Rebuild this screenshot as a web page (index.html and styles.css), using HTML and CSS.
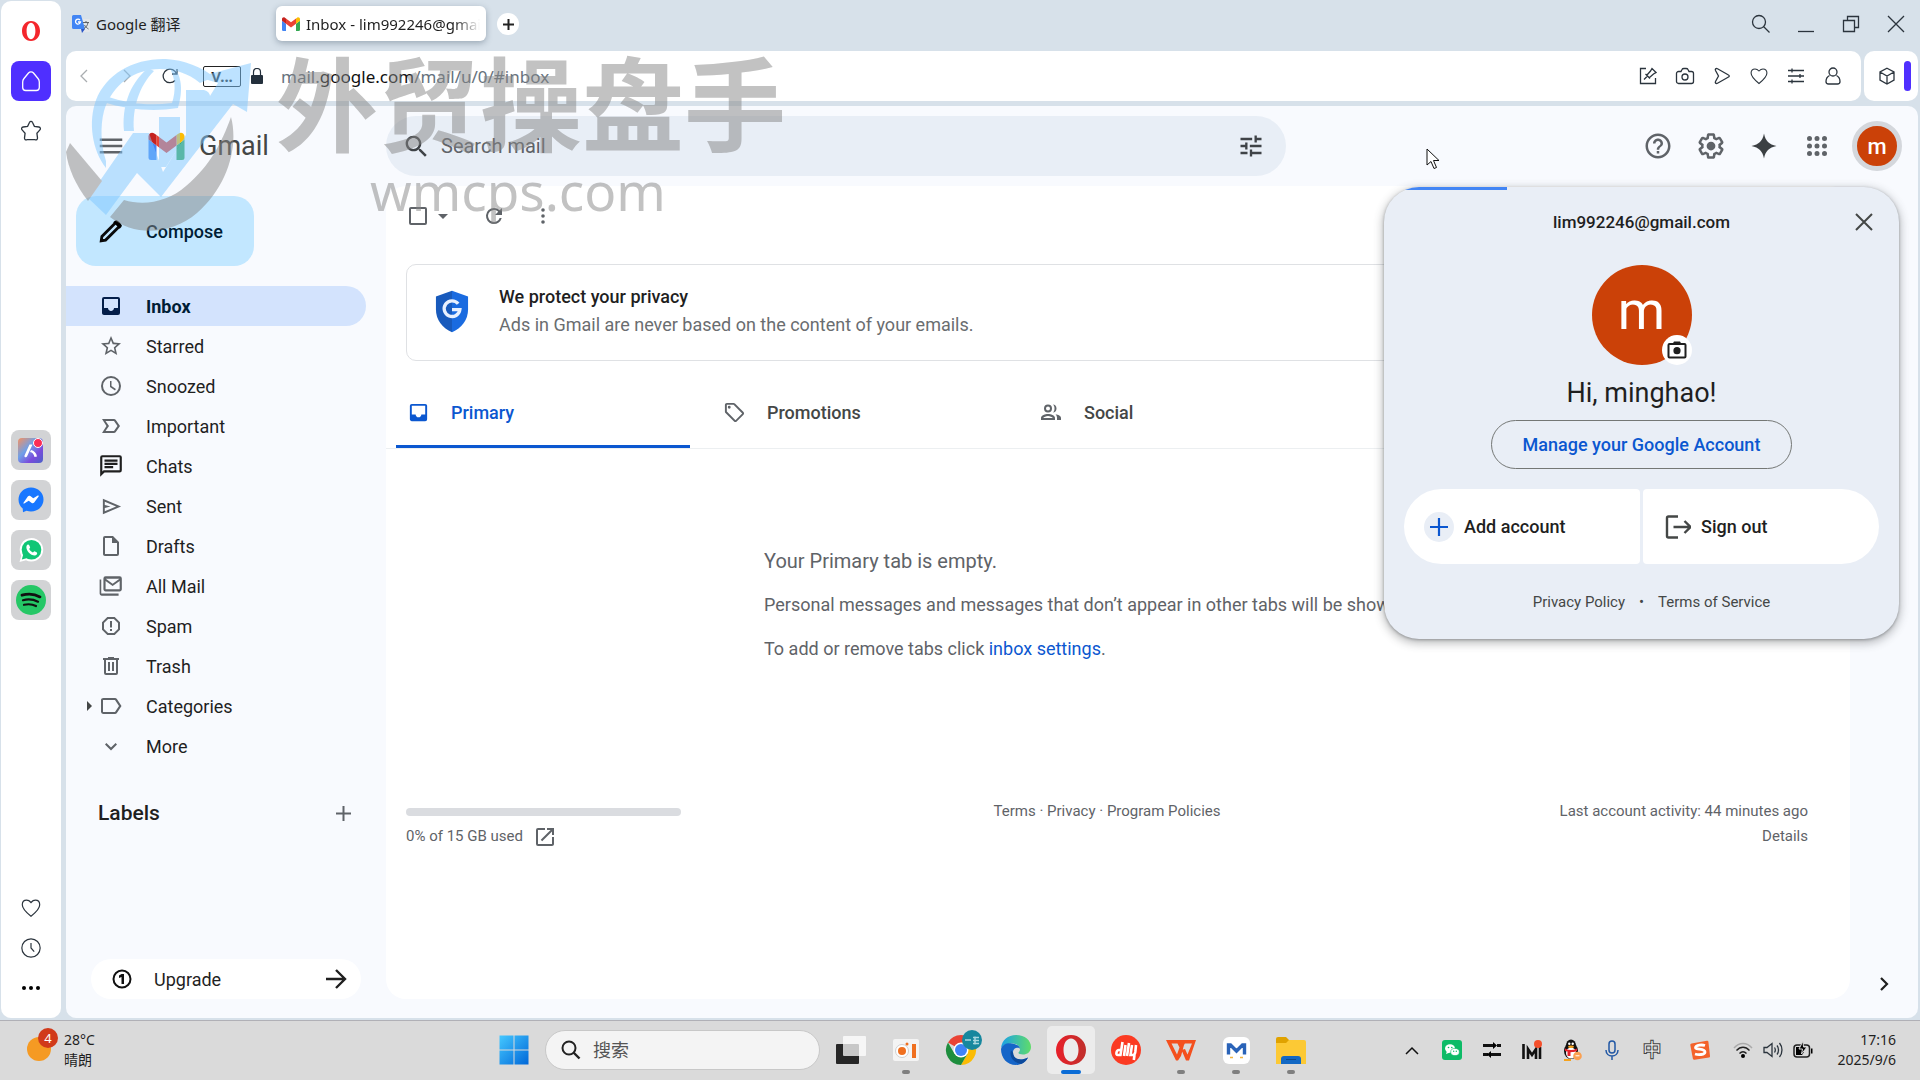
FILE: index.html
```html
<!DOCTYPE html>
<html lang="en">
<head>
  <meta charset="UTF-8" />
  <meta name="viewport" content="width=device-width, initial-scale=1.0" />
  <title>Inbox - lim992246@gmail.com - Gmail</title>
  <link rel="stylesheet" href="styles.css">
</head>
<body>

<!-- Shared icons -->
<svg class="defs" width="0" height="0" aria-hidden="true">
  <symbol id="gmail" viewBox="0 0 36 28">
    <path fill="#4285f4" d="M2.500 28H8V13.500L0 7.500v18A2.500 2.500 0 0 0 2.500 28z"/>
    <path fill="#34a853" d="M28 28h5.500a2.500 2.500 0 0 0 2.500-2.500v-18l-8 6z"/>
    <path fill="#fbbc04" d="M28 3v10.500l8-6V4.300c0-3-3.400-4.700-5.800-2.900z"/>
    <path fill="#ea4335" d="M8 13.500V3l10 7.500L28 3v10.500L18 21z"/>
    <path fill="#c5221f" d="M0 4.300v3.200l8 6V3L5.800 1.400C3.400-.4 0 1.300 0 4.300z"/>
  </symbol>
  <symbol id="search" viewBox="0 0 24 24">
    <path d="M15.500 14h-.79l-.28-.27C15.410 12.590 16 11.110 16 9.500 16 5.910 13.090 3 9.500 3S3 5.910 3 9.500 5.910 16 9.500 16c1.610 0 3.090-.59 4.230-1.570l.27.28v.79l5 4.990L20.490 19l-4.990-5zm-6 0C7.010 14 5 11.990 5 9.500S7.010 5 9.500 5 14 7.010 14 9.500 11.990 14 9.500 14z"/>
  </symbol>
  <symbol id="inbox" viewBox="0 0 24 24">
    <path d="M19 3H5a2 2 0 0 0-2 2v14c0 1.100.9 2 2 2h14a2 2 0 0 0 2-2V5a2 2 0 0 0-2-2zm0 11h-4c0 1.660-1.350 3-3 3s-3-1.340-3-3H5V5h14v9z"/>
  </symbol>
  <symbol id="heart" viewBox="0 0 24 24">
    <path d="M12 21C5 15.500 2.500 12 2.500 8.500 2.500 5.500 4.500 3.500 7.200 3.500c2 0 3.300.8 4.800 2.500 1.500-1.700 2.800-2.500 4.800-2.500 2.700 0 4.700 2 4.700 5 0 3.500-2.500 7-9.500 12.500z"/>
  </symbol>
  <symbol id="clock" viewBox="0 0 24 24">
    <circle cx="12" cy="12" r="10"/><path d="M12 6.500V12l3.500 4"/>
  </symbol>
</svg>

<div class="browser">
  <aside class="dock">
    <div class="dock-group">
      <button class="dock-btn" aria-label="Opera menu"><svg width="20" height="24" viewBox="0 0 20 24"><path fill="#f4262c" fill-rule="evenodd" d="M10 2c5.500 0 9 4.500 9 10s-3.500 10-9 10-9-4.500-9-10S4.500 2 10 2zm0 1.800C7.300 3.800 5.600 7.500 5.600 12s1.700 8.200 4.400 8.200 4.400-3.700 4.400-8.200S12.700 3.800 10 3.800z"/></svg></button>
      <button class="dock-btn home" aria-label="Home"><svg class="line" width="24" height="24" viewBox="0 0 24 24"><path d="M5 9.500 9.500 4a3.300 3.300 0 0 1 5 0L19 9.500c1 1.200 1.300 2 1.300 3.500v5.500a3 3 0 0 1-3 3H6.700a3 3 0 0 1-3-3V13C3.700 11.500 4 10.700 5 9.500z"/></svg></button>
      <button class="dock-btn" aria-label="Speed dial"><svg class="line" width="24" height="24" viewBox="0 0 24 24"><path d="M10.600 3.300c.6-1.300 2.200-1.300 2.800 0l2 4 4.500.7c1.500.2 2 1.900 1 2.900l-3 3.300.6 4.700c.2 1.500-1.200 2.500-2.500 1.800h-8c-1.300.7-2.700-.3-2.500-1.800l.6-4.700-3-3.300c-1-1-.5-2.700 1-2.900l4.500-.7z"/></svg></button>
    </div>
    <div class="dock-group apps">
      <button class="dock-btn app" aria-label="Aria"><svg width="28" height="28" viewBox="0 0 28 28"><defs><linearGradient id="aria" x1="0" y1="0" x2="1" y2="1"><stop offset="0" stop-color="#f59060"/><stop offset=".4" stop-color="#6fa0e8"/><stop offset=".7" stop-color="#7a4bdc"/><stop offset="1" stop-color="#4a62c8"/></linearGradient></defs><rect x="1" y="2" width="25" height="25" rx="4" fill="url(#aria)"/><path fill="#fff" d="M12.500 8.500h3L10 20.500c-.8 1.500-3.200.7-2.500-1zM14 14c3 .5 5.500 3 6 6.500l-2.500.5c-.8-3-2-4.500-4.500-5z"/><circle cx="21" cy="7" r="4.500" fill="#fb2c55" stroke="#fff"/></svg></button>
      <button class="dock-btn app" aria-label="Messenger"><svg width="26" height="26" viewBox="0 0 26 26"><path fill="#1877ff" d="M13 .5C6 .5.5 5.700.5 12.500c0 3.700 1.500 6.800 4.200 9L5 25.300l3.500-1.500c1.400.5 3 .7 4.500.7 7 0 12.500-5.200 12.500-12S20 .5 13 .5z"/><path fill="#fff" d="M5.500 15.800 9.800 9.500c.6-.8 1.700-1 2.500-.5l3 2.200 4.500-2.700c.6-.3 1.200.3.800.9l-4.400 6c-.6.8-1.700 1-2.500.5l-3-2.200-4.500 2.900c-.5.3-1-.3-.7-.8z"/></svg></button>
      <button class="dock-btn app" aria-label="WhatsApp"><svg width="26" height="26" viewBox="0 0 26 26"><path fill="#fff" d="M13.500 1A11.800 11.800 0 0 0 3.300 18.700L1.500 25l6.500-1.700A11.800 11.800 0 1 0 13.500 1z"/><circle cx="13.500" cy="12.800" r="9.800" fill="#10c676"/><path fill="#10c676" d="m3.800 22.500 1.700-6 4 4.500z"/><path fill="#fff" d="M8.500 9c.5-1.500 2-2 2.600-1l1 2.300c.2.500-.9 1.500-.9 1.800.7 1.600 2 2.700 3.700 3.400.4 0 1.200-1.300 1.700-1.200l2.300 1.200c.8.700-.2 2.700-1.800 3-4 .4-9.700-5-8.600-9.500z"/></svg></button>
      <button class="dock-btn app" aria-label="Spotify"><svg width="30" height="30" viewBox="0 0 30 30"><circle cx="15" cy="15" r="15" fill="#25c766"/><path fill="none" stroke="#111" stroke-linecap="round" stroke-width="2.800" d="M6 10.200c6.500-1.700 13-1 18 1.700"/><path fill="none" stroke="#111" stroke-linecap="round" stroke-width="2.200" d="M7 15.200c5.500-1.400 10.500-.8 15 1.500M8 19.800c4.500-1 8.500-.6 12 1.200"/></svg></button>
    </div>
    <div class="dock-group tight">
      <button class="dock-btn" aria-label="Pinboards"><svg class="line" width="22" height="22"><use href="#heart"/></svg></button>
      <button class="dock-btn" aria-label="History"><svg class="line" width="22" height="22"><use href="#clock"/></svg></button>
      <button class="dock-btn" aria-label="More"><svg width="20" height="6" viewBox="0 0 20 6"><circle cx="3" cy="3" r="2"/><circle cx="10" cy="3" r="2"/><circle cx="17" cy="3" r="2"/></svg></button>
    </div>
  </aside>

  <div class="window">
    <div class="tabbar">
      <button class="browser-tab"><svg width="18" height="20" viewBox="0 0 18 20"><rect x="8" y="5" width="10" height="13" rx="1" fill="#e3e6ea"/><path fill="#4285f4" d="M1.500 1H9l4 14H1.500A1.500 1.500 0 0 1 0 13.500v-11A1.500 1.500 0 0 1 1.500 1z"/><path fill="#2a56c6" d="m9 15 1 4 3-4z"/><path fill="none" stroke="#fff" stroke-width="1.300" d="M8 6a2.500 2.500 0 1 0 .5 2H6"/><path fill="none" stroke="#5f6368" d="M11 8.500h6M14 7v1.500M16 8.500c-.5 3-2 5-4 6M12.500 11c1 2 2.500 3 4 4"/></svg><span>Google 翻译</span></button>
      <button class="browser-tab active"><svg width="18" height="14"><use href="#gmail"/></svg><span>Inbox - lim992246@gmail.com</span></button>
      <button class="new-tab" aria-label="New tab"><svg width="11" height="11" viewBox="0 0 11 11"><path d="M5.500 0v11M0 5.500h11" stroke="#222" stroke-width="2"/></svg></button>
      <div class="window-controls">
        <button aria-label="Search tabs"><svg class="line" width="20" height="20" viewBox="0 0 20 20"><circle cx="8" cy="8" r="6.500"/><path d="m12.500 12.500 6 6"/></svg></button>
        <button aria-label="Minimize"><svg class="line" width="18" height="18" viewBox="0 0 18 18"><path d="M1 16.500h16"/></svg></button>
        <button aria-label="Restore"><svg class="line" width="18" height="18" viewBox="0 0 18 18"><path d="M5.500 5.500v-4h11v11h-4M1.500 5.500h11v11h-11z"/></svg></button>
        <button aria-label="Close"><svg class="line" width="18" height="18" viewBox="0 0 18 18"><path d="m1 1 16 16M17 1 1 17"/></svg></button>
      </div>
    </div>

    <div class="toolbar-row">
      <div class="address-bar">
        <button class="nav-btn faded" aria-label="Back"><svg class="line" width="8" height="14" viewBox="0 0 8 14"><path d="M7 1 1 7l6 6"/></svg></button>
        <button class="nav-btn faded" aria-label="Forward"><svg class="line" width="8" height="14" viewBox="0 0 8 14"><path d="m1 1 6 6-6 6"/></svg></button>
        <button class="nav-btn reload" aria-label="Reload"><svg class="line" width="16" height="16" viewBox="0 0 16 16"><path d="M13 12.500A6.800 6.800 0 1 1 14.500 6M15 1v5h-5"/></svg></button>
        <button class="vpn">V...</button>
        <svg class="lock" width="12" height="16" viewBox="0 0 12 16"><rect y="7" width="12" height="9" rx="1" fill="#24303c"/><path fill="none" stroke="#24303c" stroke-width="1.200" d="M2.500 7V4a3.500 3.500 0 0 1 7 0v3"/></svg>
        <div class="url">mail.<b>google.com</b>/mail/u/0/#inbox</div>
        <div class="page-actions">
          <button aria-label="Edit"><svg class="line" width="18" height="18" viewBox="0 0 18 18"><path d="M7 1.500H1.500v15h15V11M5 12.500l3.500-3.500M6.500 7l4.500 4.500M8 8l3.500-4L13 1.500 17 5.500l-2.500 1.500-4 3.500"/></svg></button>
          <button aria-label="Snapshot"><svg class="line" width="20" height="18" viewBox="0 0 20 18"><path d="M3.500 4.500H6L7 2.500C7.300 1.800 8 1.500 9 1.500h2c1 0 1.700.3 2 1l1 2h2.500a2 2 0 0 1 2 2v8a2 2 0 0 1-2 2h-13a2 2 0 0 1-2-2v-8a2 2 0 0 1 2-2z"/><circle cx="10" cy="10" r="3"/></svg></button>
          <button aria-label="Send"><svg class="line" width="18" height="18" viewBox="0 0 18 18"><path d="M2.500 3.500c-.7-1.500.5-2.500 2-1.700L15.500 8c1 .5 1 1.500 0 2l-11 6.200c-1.500.8-2.700-.2-2-1.700L5.500 9z"/></svg></button>
          <button aria-label="Save to pinboard"><svg class="line" width="20" height="20"><use href="#heart"/></svg></button>
          <button aria-label="Easy setup"><svg class="line" width="18" height="18" viewBox="0 0 18 18"><path d="M1 3.500h16M1 9h16M1 14.500h16M5 1.500v4M13 7v4M5 12.500v4"/></svg></button>
          <button aria-label="Profile"><svg class="line" width="16" height="18" viewBox="0 0 16 18"><circle cx="8" cy="5" r="4"/><path d="M4.500 8.500C1.500 10 1 12 1 14.500c0 1.500.7 2.500 2.500 2.500h9c1.800 0 2.500-1 2.500-2.500 0-2.500-.5-4.500-3.500-6"/></svg></button>
        </div>
      </div>
      <div class="side-box">
        <button aria-label="Extensions"><svg class="line" width="18" height="18" viewBox="0 0 18 18"><path d="M9 1.200 16 5v8l-7 4-7-4V5zM2 5l7 4 7-4M9 9v8"/></svg></button>
        <span class="side-mark"></span>
      </div>
    </div>

    <div class="page">
      <header class="gmail-header">
        <div class="brand">
          <button class="menu-btn" aria-label="Main menu"><svg width="30" height="30" viewBox="0 0 24 24"><path fill="#5f6368" d="M3 18h18v-2H3v2zm0-5h18v-2H3v2zm0-7v2h18V6H3z"/></svg></button>
          <svg width="37" height="28"><use href="#gmail"/></svg>
          <span class="brand-name">Gmail</span>
        </div>
        <form class="search">
          <svg width="29" height="29" fill="#3f4347"><use href="#search"/></svg>
          <input type="text" aria-label="Search mail" placeholder="Search mail">
          <button type="button" aria-label="Show search options"><svg width="28" height="28" viewBox="0 0 24 24"><path fill="#3f4347" d="M3 17v2h6v-2H3zM3 5v2h10V5H3zm10 16v-2h8v-2h-8v-2h-2v6h2zM7 9v2H3v2h4v2h2V9H7zm14 4v-2H11v2h10zm-6-4h2V7h4V5h-4V3h-2v6z"/></svg></button>
        </form>
        <div class="header-actions">
          <button aria-label="Support"><svg width="30" height="30" viewBox="0 0 24 24"><path d="M11 18h2v-2h-2v2zm1-16C6.480 2 2 6.480 2 12s4.480 10 10 10 10-4.480 10-10S17.520 2 12 2zm0 18c-4.410 0-8-3.590-8-8s3.590-8 8-8 8 3.590 8 8-3.590 8-8 8zm0-14c-2.210 0-4 1.790-4 4h2c0-1.100.9-2 2-2s2 .9 2 2c0 2-3 1.750-3 5h2c0-2.250 3-2.500 3-5 0-2.210-1.790-4-4-4z"/></svg></button>
          <button aria-label="Settings"><svg width="30" height="30" viewBox="0 0 24 24"><path d="M13.850 22.250h-3.700c-.74 0-1.360-.54-1.450-1.270l-.27-1.890c-.27-.14-.53-.29-.79-.46l-1.800.72c-.7.26-1.470-.03-1.810-.65L2.200 15.530c-.35-.66-.2-1.440.36-1.880l1.530-1.190c-.01-.15-.02-.3-.02-.46 0-.15.01-.31.02-.46l-1.520-1.190c-.59-.45-.74-1.260-.37-1.880l1.850-3.190c.34-.62 1.110-.9 1.790-.63l1.810.73c.26-.17.52-.32.78-.46l.27-1.910c.09-.7.71-1.250 1.440-1.250h3.700c.74 0 1.360.54 1.450 1.270l.27 1.890c.27.14.53.29.79.46l1.800-.72c.71-.26 1.480.03 1.820.65l1.840 3.180c.36.66.2 1.440-.36 1.880l-1.520 1.190c.01.15.02.3.02.46s-.01.31-.02.46l1.520 1.190c.56.45.72 1.230.37 1.860l-1.860 3.220c-.34.62-1.110.9-1.800.63l-1.800-.72c-.26.17-.52.32-.78.46l-.27 1.910c-.1.68-.72 1.220-1.460 1.220zm-3.230-2h2.760l.37-2.550.53-.22c.44-.18.88-.44 1.340-.78l.45-.34 2.380.96 1.380-2.400-2.030-1.580.07-.56c.03-.26.06-.51.06-.78s-.03-.53-.06-.78l-.07-.56 2.030-1.580-1.390-2.400-2.390.96-.45-.35c-.42-.32-.87-.58-1.330-.77l-.52-.22-.37-2.550h-2.760l-.37 2.550-.53.21c-.44.19-.88.44-1.340.79l-.45.33-2.380-.95-1.390 2.390 2.030 1.580-.07.56a7 7 0 0 0-.06.79c0 .26.02.53.06.78l.07.56-2.030 1.580 1.380 2.400 2.390-.96.45.35c.43.33.86.58 1.330.77l.53.22.38 2.550z"/><circle cx="12" cy="12" r="3.500"/></svg></button>
          <button aria-label="Ask Gemini"><svg width="26" height="26" viewBox="0 0 26 26"><path fill="#3c4043" d="M13 .5C14.500 8 18 11.500 25.500 13 18 14.500 14.500 18 13 25.500 11.500 18 8 14.500.5 13 8 11.500 11.500 8 13 .5z"/></svg></button>
          <button aria-label="Google apps"><svg width="30" height="30" viewBox="0 0 24 24"><path d="M6 8a2 2 0 1 0 0-4 2 2 0 0 0 0 4zm6 12a2 2 0 1 0 0-4 2 2 0 0 0 0 4zm-6 0a2 2 0 1 0 0-4 2 2 0 0 0 0 4zm0-6a2 2 0 1 0 0-4 2 2 0 0 0 0 4zm6 0a2 2 0 1 0 0-4 2 2 0 0 0 0 4zm4-8a2 2 0 1 0 4 0 2 2 0 0 0-4 0zm-4 2a2 2 0 1 0 0-4 2 2 0 0 0 0 4zm6 6a2 2 0 1 0 0-4 2 2 0 0 0 0 4zm0 6a2 2 0 1 0 0-4 2 2 0 0 0 0 4z"/></svg></button>
          <button class="avatar" aria-label="Google Account">m</button>
        </div>
      </header>

      <div class="gmail-body">
        <div class="sidebar">
          <button class="compose"><svg width="26" height="26" viewBox="0 0 24 24"><path fill="none" stroke="#0a0a0a" stroke-width="2.600" d="M3 21l.6-4L16 4.600c.8-.8 1.600-.8 2.400 0l1 1c.8.8.8 1.600 0 2.400L7 20.400z"/><path d="m14 4 6 6 1.500-1.700c.7-.8.7-1.500 0-2.300l-3.500-3.500c-.8-.7-1.500-.7-2.300 0z"/></svg>Compose</button>
          <nav class="folders">
            <a href="#" class="folder current"><svg width="24" height="24"><use href="#inbox"/></svg>Inbox</a>
            <a href="#" class="folder"><svg width="24" height="24" viewBox="0 0 24 24"><path d="m22 9.240-7.190-.62L12 2 9.190 8.630 2 9.240l5.460 4.730L5.820 21 12 17.270 18.180 21l-1.630-7.030L22 9.240zM12 15.400l-3.760 2.270 1-4.280-3.320-2.880 4.380-.38L12 6.100l1.710 4.040 4.380.38-3.320 2.880 1 4.280L12 15.400z"/></svg>Starred</a>
            <a href="#" class="folder"><svg width="24" height="24" viewBox="0 0 24 24"><path d="M12 2a10 10 0 1 0 0 20 10 10 0 0 0 0-20zm0 18a8 8 0 1 1 0-16 8 8 0 0 1 0 16zm.5-13H11v6l5 3.500.9-1.400-4.400-3z"/></svg>Snoozed</a>
            <a href="#" class="folder"><svg width="24" height="24" viewBox="0 0 24 24"><path d="M15 19H3l4.500-7L3 5h12c.65 0 1.260.31 1.630.84L21 12l-4.370 6.160c-.37.52-.98.84-1.630.84zm-8.500-2H15l3.500-5L15 7H6.500l3.500 5-3.500 5z"/></svg>Important</a>
            <a href="#" class="folder dark"><svg width="26" height="26" viewBox="0 0 24 24"><path d="M4 4h16v12H5.170L4 17.170V4m0-2a2 2 0 0 0-1.990 2L2 22l4-4h14a2 2 0 0 0 2-2V4a2 2 0 0 0-2-2H4zm2 10h8v2H6v-2zm0-3h12v2H6V9zm0-3h12v2H6V6z"/></svg>Chats</a>
            <a href="#" class="folder"><svg width="23" height="23" viewBox="0 0 24 24"><path d="M3 20V4l19 8zm2-3 11.800-5L5 7v3.500l6 1.500-6 1.500z"/></svg>Sent</a>
            <a href="#" class="folder"><svg width="24" height="24" viewBox="0 0 24 24"><path d="M14 2H6a2 2 0 0 0-1.990 2L4 20c0 1.100.89 2 1.990 2H18a2 2 0 0 0 2-2V8l-6-6zM6 20V4h7v5h5v11H6z"/></svg>Drafts</a>
            <a href="#" class="folder"><svg width="26" height="26" viewBox="0 0 24 24"><path d="M20 3H7a2 2 0 0 0-2 2v10c0 1.100.9 2 2 2h13c1.100 0 2-.9 2-2V5a2 2 0 0 0-2-2zm0 12H7V7.400l6.500 4.600L20 7.400V15zm-6.500-5L7.200 5.200h12.600zM3 6H1.500v13c0 1.100.9 2 2 2H19v-2H3z"/></svg>All Mail</a>
            <a href="#" class="folder"><svg width="24" height="24" viewBox="0 0 24 24"><path d="M15.700 3H8.300L3 8.300v7.400L8.300 21h7.400l5.300-5.300V8.300zM19 14.900 14.900 19H9.100L5 14.900V9.100L9.100 5h5.800L19 9.100zM11 7h2v6.500h-2zm0 8h2v2h-2z"/></svg>Spam</a>
            <a href="#" class="folder"><svg width="24" height="24" viewBox="0 0 24 24"><path d="M15 4V3H9v1H4v2h1v13a2 2 0 0 0 2 2h10a2 2 0 0 0 2-2V6h1V4h-5zm2 15H7V6h10v13zM9 8h2v9H9zm4 0h2v9h-2z"/></svg>Trash</a>
            <a href="#" class="folder expandable"><svg width="24" height="24" viewBox="0 0 24 24"><path d="M16 20H4.500A2.500 2.500 0 0 1 2 18V6c0-1.200 1-2 2.500-2H16c.8 0 1.400.3 1.900 1l4.600 7-4.600 7c-.5.7-1.100 1-1.900 1zM4 6v12h12l4-6-4-6z"/></svg>Categories</a>
            <a href="#" class="folder"><svg width="24" height="24" viewBox="0 0 24 24"><path d="M12 16.400 6 10.400 7.400 9l4.600 4.600L16.600 9l1.400 1.400z"/></svg>More</a>
          </nav>
          <div class="labels-head">
            <h2>Labels</h2>
            <button aria-label="Create new label"><svg width="15" height="15" viewBox="0 0 15 15"><path stroke="#5f6368" stroke-width="2" d="M7.500 0v15M0 7.500h15"/></svg></button>
          </div>
          <button class="upgrade"><svg width="20" height="20" viewBox="0 0 20 20"><circle cx="10" cy="10" r="8.500" fill="none" stroke="#111" stroke-width="2"/><path fill="#111" d="M9.500 5H12v10H9.500V8L7 9V6.500z"/></svg><span>Upgrade</span><svg width="22" height="20" viewBox="0 0 22 20"><path fill="none" stroke="#1f1f1f" stroke-width="2.400" d="M1 10h19M11 1l9 9-9 9"/></svg></button>
        </div>

        <main class="mail">
          <div class="mail-tools">
            <input type="checkbox" aria-label="Select">
            <button class="select-more" aria-label="Select options"></button>
            <button aria-label="Refresh"><svg width="24" height="24" viewBox="0 0 24 24"><path d="M17.650 6.350A7.960 7.960 0 0 0 12 4a8 8 0 1 0 7.730 10h-2.080A6 6 0 1 1 12 6c1.660 0 3.140.69 4.220 1.780L13 11h7V4z"/></svg></button>
            <button aria-label="More"><svg width="24" height="24" viewBox="0 0 24 24"><circle cx="12" cy="6" r="1.800"/><circle cx="12" cy="12" r="1.800"/><circle cx="12" cy="18" r="1.800"/></svg></button>
          </div>

          <section class="notice">
            <svg width="34" height="43" viewBox="0 0 36 44"><path fill="#185abc" d="M18 0 1 6v14c0 11 7 20 17 24z"/><path fill="#1a6be0" d="m18 0 17 6v14c0 11-7 20-17 24z"/><path fill="none" stroke="#e8f0fe" stroke-width="3.600" d="M24.500 13.800A8.300 8.300 0 1 0 26.300 20H18"/></svg>
            <div>
              <h3>We protect your privacy</h3>
              <p>Ads in Gmail are never based on the content of your emails.</p>
            </div>
          </section>

          <div class="categories">
            <a href="#" class="category selected"><svg width="23" height="23"><use href="#inbox"/></svg>Primary</a>
            <a href="#" class="category"><svg width="23" height="23" viewBox="0 0 24 24"><path d="M12.500 2.600 21.400 11.500c.8.8.8 2 0 2.800l-7.100 7.100c-.8.8-2 .8-2.800 0L2.600 12.500A2 2 0 0 1 2 11.100V4c0-1.100.9-2 2-2h7.100c.5 0 1 .2 1.400.6zM4 4v7l9 9 7-7-9-9zm2.500 4a1.500 1.500 0 1 1 0-3 1.500 1.500 0 0 1 0 3z"/></svg>Promotions</a>
            <a href="#" class="category"><svg width="24" height="24" viewBox="0 0 24 24"><path d="M9 12.500a4 4 0 1 0 0-8 4 4 0 0 0 0 8zm0-6a2 2 0 1 1 0 4 2 2 0 0 1 0-4zm0 7.500c-2.700 0-7 1.300-7 4v2h14v-2c0-2.700-4.300-4-7-4zm-4.800 4c.6-1 2.800-2 4.800-2s4.200 1 4.800 2zM14 4.600c1.800 0 3.500 1.500 3.500 3.900s-1.700 4-3.500 4c1-1 1.500-2.300 1.500-4S15 5.700 14 4.600zM16.500 14.300c2.800.4 5.500 1.700 5.500 3.700v2h-4v-2c0-1.500-.5-2.700-1.500-3.700z"/></svg>Social</a>
          </div>

          <section class="empty">
            <p class="empty-title">Your Primary tab is empty.</p>
            <p>Personal messages and messages that don’t appear in other tabs will be shown here.</p>
            <p>To add or remove tabs click <a href="#">inbox settings</a>.</p>
          </section>

          <footer class="mail-footer">
            <div>
              <div class="quota"></div>
              <p>0% of 15 GB used <svg width="24" height="24" viewBox="0 0 24 24"><path fill="#5f6368" d="M19 19H5V5h7V3H5a2 2 0 0 0-2 2v14a2 2 0 0 0 2 2h14c1.100 0 2-.9 2-2v-7h-2v7zM14 3v2h3.590l-9.830 9.830 1.410 1.410L19 6.410V10h2V3h-7z"/></svg></p>
            </div>
            <p class="legal"><a href="#">Terms</a> · <a href="#">Privacy</a> · <a href="#">Program Policies</a></p>
            <div class="activity">
              <p>Last account activity: 44 minutes ago</p>
              <p><a href="#">Details</a></p>
            </div>
          </footer>
        </main>

        <div class="side-panel">
          <button aria-label="Show side panel"><svg width="9" height="14" viewBox="0 0 9 14"><path fill="none" stroke="#1f1f1f" stroke-width="2.200" d="m1 1 6 6-6 6"/></svg></button>
        </div>
      </div>

      <div class="account-card" role="dialog" aria-label="Account">
        <div class="loading"></div>
        <div class="account-top">
          <span>lim992246@gmail.com</span>
          <button class="close" aria-label="Close"><svg width="18" height="18" viewBox="0 0 18 18"><path stroke="#444746" stroke-width="2" d="m1 1 16 16M17 1 1 17"/></svg></button>
        </div>
        <div class="big-avatar">m
          <button class="camera" aria-label="Change picture"><svg width="20" height="18" viewBox="0 0 20 18"><rect x="1.500" y="3" width="17" height="13.500" rx="1" fill="none" stroke="#1f1f1f" stroke-width="2"/><path fill="#1f1f1f" d="M5.500 3 7 .5h6L14.500 3z"/><circle cx="10" cy="9.700" r="3.600" fill="#1f1f1f"/></svg></button>
        </div>
        <h1>Hi, minghao!</h1>
        <a href="#" class="manage">Manage your Google Account</a>
        <div class="account-actions">
          <button class="add-account"><span class="plus"><svg width="18" height="18" viewBox="0 0 18 18"><path stroke="#0b57d0" stroke-width="2.200" d="M9 0v18M0 9h18"/></svg></span>Add account</button>
          <button class="sign-out"><svg width="26" height="24" viewBox="0 0 26 24"><path fill="none" stroke="#444746" stroke-width="2.400" d="M13 1.500H3.500c-1 0-1.500.5-1.500 1.500v18c0 1 .5 1.500 1.500 1.500H13M8.500 12H25M19.500 6l6 6-6 6"/></svg>Sign out</button>
        </div>
        <div class="account-links"><a href="#">Privacy Policy</a><span>•</span><a href="#">Terms of Service</a></div>
      </div>
    </div>
  </div>
</div>

<div class="taskbar">
  <div class="weather">
    <div class="sun"><svg width="28" height="28" viewBox="0 0 28 28"><circle cx="13" cy="15" r="12" fill="#f59a23"/></svg><span class="count">4</span></div>
    <div>28°C<br>晴朗</div>
  </div>
  <div class="task-items">
    <button class="task" aria-label="Start"><svg width="30" height="30" viewBox="0 0 30 30"><defs><linearGradient id="win" x1="0" y1="0" x2="1" y2="1"><stop offset="0" stop-color="#45c8ff"/><stop offset="1" stop-color="#0067d8"/></linearGradient></defs><path fill="url(#win)" d="M.5.500h14v14H.5zm15 0h14v14h-14zm-15 15h14v14H.5zm15 0h14v14h-14z"/></svg></button>
    <label class="task-search"><svg width="20" height="20" viewBox="0 0 20 20"><circle cx="8" cy="8" r="6.500" fill="none" stroke="#222" stroke-width="2"/><path stroke="#222" stroke-width="2.400" d="m12.500 12.500 6 6"/></svg><input type="text" placeholder="搜索" aria-label="搜索"></label>
    <button class="task" aria-label="Task view"><svg width="30" height="28" viewBox="0 0 30 28"><rect y="8" width="23" height="20" rx="1" fill="#262626"/><rect x="7" width="23" height="20" rx="1" fill="#fff" opacity=".75"/></svg></button>
    <button class="task running" aria-label="Recorder"><svg width="28" height="24" viewBox="0 0 28 24"><rect x="1" y="1" width="26" height="22" rx="2" fill="#f4f4f4"/><circle cx="10" cy="13" r="6.500" fill="#fff" stroke="#d0d0d0"/><circle cx="10" cy="13" r="4" fill="#f07020"/><circle cx="15" cy="6" r="1.500" fill="#f07020"/><path fill="#f07020" d="M20 6h4v14h-4z"/></svg></button>
    <button class="task" aria-label="Chrome"><svg width="44" height="40" viewBox="-6 0 44 40"><path fill="#ea4335" d="M16 20 3 12.500a15 15 0 0 1 26 0z"/><path fill="#1e8e3e" d="M16 35A15 15 0 0 1 3 12.500l6.500 11.300L16 27z"/><path fill="#fbbc05" d="M16 35a15 15 0 0 0 13-22.500H16l6.500 11.300z"/><path fill="#1e8e3e" d="M9.500 23.800 16 35l6.500-11.200z"/><circle cx="16" cy="20" r="7.500" fill="#fff"/><circle cx="16" cy="20" r="6" fill="#3f83f8"/><circle cx="27" cy="10" r="10" fill="#16879e"/><path stroke="#a9d7df" stroke-width="1.500" d="M20 10h6M28 7.500h6M28 10.500h6M28 13.500h6M30 6.500v8"/></svg></button>
    <button class="task" aria-label="Edge"><svg width="30" height="30" viewBox="0 0 30 30"><defs><linearGradient id="edge"><stop offset="0" stop-color="#1aa0e8"/><stop offset="1" stop-color="#5fdc6a"/></linearGradient></defs><path fill="url(#edge)" d="M0 13C1 5 7 0 15 0c9 0 15 5.500 15 12 0 5-4 7.500-8 7.500-3 0-5-1-4.500-2 1-1 1.500-2 1.500-3.500 0-4-5-6-10-5.500S1 11 0 13z"/><path fill="#1565c8" d="M0 14C2 8.500 7 8 10.500 8.500 15 9 19 11 19 14c0-2-7-2.500-7 3.500S18 27 27 22.500C24 28 19.500 30 15 30 6 30 0 23 0 14z"/><path fill="#0c4a9c" d="M10 15.500c-2 6 2 12 10 13.500 3-1 5.500-3.500 7-6.500-9 4.500-15 1-15-5z"/></svg></button>
    <button class="task focused" aria-label="Opera"><svg width="30" height="30" viewBox="0 0 30 30"><defs><linearGradient id="op" x2="1"><stop offset="0" stop-color="#e8202a"/><stop offset="1" stop-color="#c0302c"/></linearGradient></defs><path fill="url(#op)" fill-rule="evenodd" d="M15 0a15 15 0 1 1 0 30 15 15 0 0 1 0-30zm0 3.500c-4.500 0-7.500 5-7.500 11.500s3 11.500 7.500 11.500 7.500-5 7.500-11.500-3-11.500-7.500-11.500z"/></svg></button>
    <button class="task" aria-label="Downloader"><svg width="30" height="30" viewBox="0 0 30 30"><circle cx="15" cy="15" r="15" fill="#fb3a22"/><path fill="none" stroke="#fff" stroke-width="2.600" d="M11.500 7 9.500 20H7c-1.500 0-1.800-1-1.500-2.500s1-2.500 2.500-2.500h2M14.500 10 13 21M18 8l-2 13M21 10l-1.500 10H22c1.500 0 2-1 2.300-3l.7-7M23.500 20l-.7 5"/></svg></button>
    <button class="task running" aria-label="WPS"><svg width="30" height="22" viewBox="0 0 30 22"><path fill="#f4501e" d="M0 1h21l-3 5-3 11-3 4.500h-2zm5.500 3.500 5.500 11 2.500-7-2-4zM19 10l2.500 5.500 4.500-11h-9L19 1h11l-7 20.500h-3L15.500 11z"/></svg></button>
    <button class="task running" aria-label="Mail client"><svg width="27" height="27" viewBox="0 0 27 27"><rect width="27" height="27" rx="6" fill="#fff"/><path fill="none" stroke="#2a63b8" stroke-width="3.400" d="M5.500 17.500V8h2l6 6 6-6h2v9.500"/><path fill="none" stroke="#f2b440" stroke-width="1.400" d="M7 20.500h3M17 20.500h3"/></svg></button>
    <button class="task running" aria-label="Explorer"><svg width="30" height="27" viewBox="0 0 30 27"><path fill="#e0a200" d="M0 2a2 2 0 0 1 2-2h8l3 3v6H0z"/><path fill="#fcc935" d="M0 6h10l3-3h15a2 2 0 0 1 2 2v22H0z"/><path fill="#1268c4" d="M5 27v-5a3 3 0 0 1 3-3h14a3 3 0 0 1 3 3v5z"/><path stroke="#0c4a8c" d="M10 22.500h10"/></svg></button>
  </div>
  <div class="tray">
    <div class="tray-icons wide">
      <button aria-label="Hidden icons"><svg width="14" height="9" viewBox="0 0 14 9"><path fill="none" stroke="#111" stroke-width="1.500" d="m1 8 6-6 6 6"/></svg></button>
      <button aria-label="WeChat"><svg width="20" height="20" viewBox="0 0 20 20"><rect width="20" height="20" rx="3" fill="#0dbb67"/><ellipse cx="8" cy="8.500" rx="5" ry="4.200" fill="#fff"/><path fill="#fff" d="m4 14 1-3 3 1.500z"/><ellipse cx="13" cy="12" rx="4.300" ry="3.600" fill="#fff" stroke="#0dbb67" stroke-width=".6"/><g fill="#0dbb67"><circle cx="6.500" cy="7.500" r=".8"/><circle cx="9.800" cy="7.500" r=".8"/><circle cx="11.700" cy="11.300" r=".7"/><circle cx="14.300" cy="11.300" r=".7"/></g></svg></button>
      <button aria-label="Audio"><svg width="18" height="16" viewBox="0 0 18 16"><path stroke="#111" stroke-width="3" d="M0 3.500h12M14 3.500h4M6 12.500h12M0 12.500h5"/><path d="M10 0l4 3.500L10 7zM8 9l-4 3.500L8 16z"/></svg></button>
      <button aria-label="iMe"><svg width="20" height="20" viewBox="0 0 20 20"><path fill="none" stroke="#111" stroke-width="2.600" d="M1.500 4v15M6 19V9l4 6 4-6v10M18 7v12"/><circle cx="16" cy="4" r="4" fill="#f4502c"/></svg></button>
      <button aria-label="QQ"><svg width="20" height="22" viewBox="0 0 20 22"><ellipse cx="9" cy="12" rx="7" ry="8" fill="#111"/><ellipse cx="9" cy="6.500" rx="5" ry="6" fill="#111"/><ellipse cx="9" cy="14" rx="5" ry="5.500" fill="#fff"/><circle cx="7.300" cy="4.800" r="1.200" fill="#fff"/><circle cx="10.700" cy="4.800" r="1.200" fill="#fff"/><ellipse cx="9" cy="7.800" rx="3" ry="1.200" fill="#f6a21c"/><path fill="#e3222b" d="M3 9.500c4 2 8 2 12 0v2.500c-2 .8-4 1.200-6.500 1.200V17H5.500v-4.500L3 12z"/><path fill="#f6a21c" d="M2 20h7v2H2z"/><circle cx="15.500" cy="17" r="4.300" fill="#fba050"/><path stroke="#fff" d="M13.500 16.800h4"/></svg></button>
      <button aria-label="Microphone"><svg width="14" height="20" viewBox="0 0 14 20"><g fill="none" stroke="#2258a5" stroke-width="1.500"><rect x="4" y="1" width="6" height="12" rx="3"/><path d="M1 10c0 8 12 8 12 0M7 16v4"/></g></svg></button>
      <button class="ime">中</button>
    </div>
    <div class="tray-icons wide">
      <button aria-label="Sogou"><svg width="20" height="20" viewBox="0 0 20 20"><path fill="#f4622a" d="M1.500 3.500 17 .8c.8-.1 1.300.3 1.400 1L20 16c.1.800-.4 1.300-1 1.500L4.500 19.800c-.9.100-1.400-.3-1.600-1L.3 5c-.1-.8.300-1.300 1.200-1.500z"/><path fill="none" stroke="#fff" stroke-width="2.800" d="M15 5.500c-3-1-9-.5-9.500 2-.4 2.500 9.500.8 9.500 4.500 0 3-7 3-10 2"/></svg></button>
    </div>
    <div class="tray-icons">
      <button aria-label="Network"><svg width="20" height="16" viewBox="0 0 20 16"><g fill="none" stroke="#222" stroke-width="1.400"><path stroke="#aaa" d="M1 6c5-6 13-6 18 0"/><path d="M3.500 8.500c4-4.300 9-4.300 13 0M6.500 11.500c2.200-2.300 4.800-2.300 7 0"/></g><circle cx="10" cy="14" r="2"/></svg></button>
      <button aria-label="Volume"><svg class="line" width="20" height="18" viewBox="0 0 20 18"><path d="M1 6.500h3l5-4v13l-5-4H1zM11.500 6.500c1 1.500 1 3.500 0 5M14 4.500c2 2.500 2 6.500 0 9M16.500 2c3.300 4 3.300 10 0 14"/></svg></button>
      <button aria-label="Battery"><svg width="20" height="18" viewBox="0 0 20 18"><rect x="1" y="4" width="15.500" height="12" rx="3" fill="none" stroke="#222" stroke-width="1.500"/><path d="M3 6h8v5l-2 3H3zM18 7.500h1.500v5H18z"/><path stroke="#dadada" d="M10 0 6 8h3.500L8.500 13 14 6h-3.500z"/></svg></button>
    </div>
    <div class="datetime">17:16<br>2025/9/6</div>
  </div>
</div>

<!-- Overlay mark -->
<div class="mark">
  <svg class="mark-logo" width="190" height="176" viewBox="64 58 190 176">
    <g fill="#7ec7ff">
      <path d="M106 168C92 150 88 122 96 100 106 74 134 58 166 59c18 1 36 8 48 18l-14 6c-12-10-26-14-40-14-26 0-48 16-56 42-4 16-3 34 2 50z"/>
      <path d="M124 131c-2-22 4-46 24-63l6 3c-14 14-22 36-20 60zM172 64c12 14 10 30 6 44-24 4-50 2-75-6l3-6c22 8 44 10 66 7 4-12 4-26-4-38z"/>
      <path d="M159 117h21v28l-14 22h-7zM186 90h18c8 2 8 10 2 20l-20 30z"/>
      <path d="M106 215 88 198l45-65h16l14 39 55-89-20-6 53-14-4 49-14-8-72 93-24-24z"/>
    </g>
    <g fill="#868686">
      <path d="M70 143l32 38-14 20C76 186 68 168 66 152z"/>
      <path d="M231 117c8 30-4 70-34 96-26 22-62 24-87 4l14-17c20 6 44 2 62-14 24-20 36-44 45-69z"/>
    </g>
  </svg>
  <div class="mark-title">外贸操盘手</div>
  <div class="mark-site">wmcps.com</div>
</div>

<svg class="pointer" width="14" height="22" viewBox="0 0 14 22"><path fill="#fff" stroke="#111" d="M1 1v16l4-3.500 3 7 2.500-1-3-7H13z"/></svg>

</body>
</html>
```
FILE: styles.css
```css
* {
  box-sizing: border-box;
}

body {
  margin: 0;
  height: 100vh;
  display: flex;
  flex-direction: column;
  overflow: hidden;
  position: relative;
  background: #d7e1ea;
  font-family: Roboto, "Noto Sans CJK SC", sans-serif;
  font-size: 18px;
  color: #1f1f1f;
}

h1, h2, h3, p {
  margin: 0;
  font-weight: 400;
}

a {
  color: inherit;
  text-decoration: none;
}

button {
  display: flex;
  align-items: center;
  justify-content: center;
  padding: 0;
  border: none;
  background: none;
  font: inherit;
  color: inherit;
  cursor: pointer;
}

svg {
  flex: none;
}

.defs {
  position: absolute;
}

.line {
  fill: none;
  stroke: #2b343d;
  stroke-width: 1.3;
}

/* Browser frame */
.browser {
  flex: 1;
  min-height: 0;
  display: flex;
  gap: 5px;
  padding: 1px 2px 2px 1px;
}

.dock {
  width: 60px;
  padding: 10px;
  display: flex;
  flex-direction: column;
  justify-content: space-between;
  background: #fff;
  border-radius: 10px;
}

.dock-group {
  display: flex;
  flex-direction: column;
  gap: 10px;
}

.dock-group.apps {
  margin-top: 11px;
}

.dock-group.tight {
  gap: 0;
}

.dock-btn {
  width: 40px;
  height: 40px;
  border-radius: 8px;
}

.home {
  background: #4f2fff;
}

.home .line {
  stroke: #fff;
}

.app {
  background: #d2d3d5;
}

.window {
  flex: 1;
  min-width: 0;
  display: flex;
  flex-direction: column;
}

.tabbar {
  height: 50px;
  padding: 5px 0 10px;
  display: flex;
  font-family: "Noto Sans", "Noto Sans CJK SC", sans-serif;
  font-size: 15px;
}

.browser-tab {
  width: 210px;
  padding: 0 6px;
  gap: 6px;
  justify-content: flex-start;
  border-radius: 6px;
}

.browser-tab span {
  overflow: hidden;
  white-space: nowrap;
}

.browser-tab.active {
  background: #fff;
  box-shadow: 0 2px 6px rgba(60, 80, 100, 0.4);
}

.browser-tab.active span {
  mask-image: linear-gradient(to right, #000 85%, transparent);
}

.new-tab {
  width: 22px;
  height: 22px;
  margin: 7px 11px;
  border-radius: 50%;
  background: #fff;
}

.window-controls {
  margin-left: auto;
  display: flex;
}

.window-controls button {
  width: 45px;
}

.toolbar-row {
  height: 50px;
  margin-bottom: 5px;
  display: flex;
  gap: 3px;
}

.address-bar {
  flex: 1;
  padding: 0 10px 0 8px;
  display: flex;
  align-items: center;
  background: #fff;
  border-radius: 10px;
  font-family: "Noto Sans", sans-serif;
  font-size: 17px;
}

.nav-btn {
  width: 20px;
  height: 30px;
  margin-right: 23px;
}

.vpn {
  width: 38px;
  height: 21px;
  border: 1px solid #222;
  border-radius: 2px;
  font-size: 15px;
  font-weight: 700;
}

.faded {
  opacity: 0.4;
}

.lock {
  margin: 0 18px 0 10px;
}

.url {
  flex: 1;
  color: #66727d;
}

.url b {
  font-weight: 400;
  color: #111;
}

.page-actions {
  display: flex;
}

.page-actions button {
  width: 37px;
  height: 30px;
}

.side-box {
  width: 54px;
  padding: 0 7px 0 14px;
  display: flex;
  align-items: center;
  justify-content: space-between;
  background: #fff;
  border-radius: 10px;
}

.side-mark {
  width: 7px;
  height: 30px;
  border-radius: 4px;
  background: #4f2fff;
}

/* Gmail */
.page {
  flex: 1;
  min-height: 0;
  position: relative;
  display: flex;
  flex-direction: column;
  background: #f8fafe;
  border-radius: 10px;
}

.gmail-header {
  height: 80px;
  display: flex;
  align-items: center;
}

.brand {
  width: 320px;
  padding-left: 30px;
  display: flex;
  align-items: center;
}

.menu-btn {
  margin-right: 22px;
}

.brand-name {
  margin-left: 14px;
  font-size: 27px;
  color: #444746;
}

.search {
  flex: 0 1 900px;
  height: 60px;
  padding: 0 21px 0 16px;
  display: flex;
  align-items: center;
  border-radius: 30px;
  background: #e8eef6;
}

.search input {
  flex: 1;
  padding: 0 10px;
  border: none;
  outline: none;
  background: none;
  font: inherit;
  font-size: 20px;
}

.search input::placeholder {
  color: #5f6368;
}

.header-actions {
  margin-left: auto;
  padding-right: 16px;
  display: flex;
  align-items: center;
  fill: #5f6368;
}

.header-actions button {
  width: 53px;
}

.header-actions .avatar {
  width: 50px;
  height: 50px;
  margin-left: 9px;
  border: 5px solid #d4d7dc;
  border-radius: 50%;
  background: #cb4108;
  color: #fff;
  font-size: 22px;
  font-weight: 500;
}

.gmail-body {
  flex: 1;
  min-height: 0;
  padding-bottom: 19px;
  display: flex;
}

.sidebar {
  width: 320px;
  padding-top: 10px;
  display: flex;
  flex-direction: column;
}

.compose {
  width: 178px;
  height: 70px;
  margin: 0 0 20px 10px;
  padding-left: 22px;
  gap: 22px;
  justify-content: flex-start;
  border-radius: 20px;
  background: #c2e7ff;
  color: #001d35;
  font-weight: 500;
}

.folders {
  width: 300px;
}

.folder {
  height: 40px;
  display: grid;
  grid-template-columns: 30px 1fr;
  column-gap: 20px;
  align-items: center;
  padding-left: 30px;
  border-radius: 0 20px 20px 0;
  fill: #5f6368;
}

.folder svg {
  justify-self: center;
}

.folder.current {
  background: #d3e3fd;
  color: #001d35;
  fill: #041e49;
  font-weight: 700;
}

.folder.dark {
  fill: #1f1f1f;
}

.folder.expandable {
  position: relative;
}

.folder.expandable::before {
  content: "";
  position: absolute;
  left: 21px;
  border: 5px solid transparent;
  border-left-color: #444746;
  border-right: none;
}

.labels-head {
  height: 40px;
  margin-top: 27px;
  padding: 0 35px 0 32px;
  display: flex;
  align-items: center;
  justify-content: space-between;
}

.labels-head h2 {
  font-size: 21px;
  font-weight: 500;
}

.upgrade {
  height: 40px;
  margin: auto 25px 0;
  padding: 0 14px 0 21px;
  border-radius: 20px;
  background: #fff;
}

.upgrade span {
  flex: 1;
  margin-left: 22px;
  text-align: left;
}

.mail {
  flex: 1;
  min-width: 0;
  background: #fff;
  border-radius: 20px;
}

.mail-tools {
  height: 60px;
  padding-left: 23px;
  display: flex;
  align-items: center;
  fill: #5f6368;
}

.mail-tools input {
  appearance: none;
  width: 18px;
  height: 18px;
  margin: 0 11px 0 0;
  border: 2px solid #5f6368;
  border-radius: 2px;
}

.select-more {
  margin-right: 34px;
  border: 5px solid transparent;
  border-top-color: #5f6368;
  border-bottom: none;
}

.mail-tools button + button + button {
  margin-left: 25px;
}

.notice {
  min-height: 97px;
  margin: 18px 20px;
  padding: 0 28px 3px;
  display: flex;
  align-items: center;
  gap: 30px;
  border: 1px solid #dfe1e4;
  border-radius: 10px;
  line-height: 28px;
}

.notice h3 {
  font-size: 18px;
  font-weight: 500;
}

.notice p {
  color: #6a6d70;
}

.categories {
  height: 70px;
  padding-left: 10px;
  display: flex;
  border-bottom: 1px solid #eceff1;
}

.category {
  width: 294px;
  margin-right: 22px;
  padding-left: 11px;
  display: flex;
  align-items: center;
  gap: 21px;
  border-bottom: 3px solid transparent;
  color: #444746;
  fill: #5f6368;
  font-weight: 500;
}

.category.selected {
  border-color: #0b57d0;
  color: #0b57d0;
  fill: #0b57d0;
}

.empty {
  padding: 98px 0 0 378px;
  display: flex;
  flex-direction: column;
  gap: 16px;
  line-height: 28px;
  white-space: nowrap;
  overflow: hidden;
  color: #5f6368;
}

.empty-title {
  font-size: 20px;
}

.empty a {
  color: #0b57d0;
}

.mail-footer {
  margin-top: 136px;
  padding: 0 42px 0 20px;
  display: grid;
  grid-template-columns: 1fr 1fr 1fr;
  font-size: 15px;
  line-height: 25px;
  color: #5f6368;
}

.quota {
  width: 275px;
  height: 8px;
  margin: 9px 0 8px;
  border-radius: 4px;
  background: #dadce0;
}

.mail-footer svg {
  margin-left: 6px;
  vertical-align: middle;
}

.legal {
  text-align: center;
}

.activity {
  text-align: right;
}

.side-panel {
  width: 68px;
  padding-bottom: 8px;
  display: flex;
  align-items: flex-end;
  justify-content: center;
}

/* Account popup */
.account-card {
  position: absolute;
  top: 81px;
  right: 19px;
  width: 515px;
  padding: 15px 20px 23px;
  display: flex;
  flex-direction: column;
  align-items: center;
  overflow: hidden;
  background: #e9eef6;
  border-radius: 35px;
  box-shadow: 0 3px 8px 2px rgba(60, 64, 67, 0.3), 0 1px 3px rgba(60, 64, 67, 0.4);
}

.loading {
  position: absolute;
  top: 0;
  left: 0;
  width: 123px;
  height: 3px;
  background: #4285f4;
}

.account-top {
  width: 100%;
  height: 40px;
  display: flex;
  align-items: center;
  justify-content: center;
  position: relative;
  font-size: 17px;
  font-weight: 500;
}

.close {
  position: absolute;
  right: 6px;
}

.big-avatar {
  width: 100px;
  height: 100px;
  margin: 23px 0 9px;
  position: relative;
  border-radius: 50%;
  background: #cb4108;
  color: #fff;
  font-size: 54px;
  line-height: 92px;
  text-align: center;
}

.camera {
  position: absolute;
  right: 0;
  bottom: 0;
  width: 30px;
  height: 30px;
  border-radius: 50%;
  background: #fff;
}

.account-card h1 {
  font-size: 27px;
  line-height: 38px;
}

.manage {
  margin-top: 8px;
  padding: 0 31px;
  border: 1px solid #747775;
  border-radius: 25px;
  line-height: 47px;
  color: #0b57d0;
  font-weight: 500;
}

.account-actions {
  width: 100%;
  margin: 20px 0 24px;
  display: grid;
  grid-template-columns: 1fr 1fr;
  gap: 3px;
}

.account-actions button {
  height: 75px;
  padding-left: 20px;
  gap: 10px;
  justify-content: flex-start;
  background: #fff;
  font-weight: 500;
}

.account-actions .add-account {
  border-radius: 38px 4px 4px 38px;
}

.account-actions .sign-out {
  padding-left: 22px;
  border-radius: 4px 38px 38px 4px;
}

.plus {
  width: 30px;
  height: 30px;
  display: flex;
  align-items: center;
  justify-content: center;
  border-radius: 50%;
  background: #e9eef6;
}

.account-links {
  padding-left: 20px;
  display: flex;
  gap: 14px;
  font-size: 15px;
  line-height: 28px;
  color: #444746;
}

/* Taskbar */
.taskbar {
  height: 60px;
  padding-bottom: 1px;
  display: flex;
  align-items: center;
  background: #dadada;
  border-top: 1px solid #b0b0b6;
  font-family: "Noto Sans", "Noto Sans CJK SC", sans-serif;
  font-size: 14px;
  line-height: 20px;
}

.weather {
  width: 490px;
  padding-left: 26px;
  display: flex;
  align-items: center;
  gap: 10px;
}

.sun {
  position: relative;
}

.count {
  position: absolute;
  top: -6px;
  right: -4px;
  width: 20px;
  height: 20px;
  border-radius: 50%;
  background: #d13a1a;
  color: #fff;
  font-size: 13px;
  text-align: center;
}

.task-items {
  display: flex;
  align-items: center;
  gap: 7px;
}

.task {
  width: 48px;
  height: 48px;
  position: relative;
  border-radius: 5px;
}

.task.focused {
  background: #ececec;
}

.running::after,
.focused::after {
  content: "";
  position: absolute;
  bottom: 0;
  width: 8px;
  height: 4px;
  border-radius: 2px;
  background: #7f7f7f;
}

.focused::after {
  width: 20px;
  background: #0a6cd6;
}

.task-search {
  width: 275px;
  height: 40px;
  padding: 0 15px;
  display: flex;
  align-items: center;
  gap: 10px;
  border: 1px solid #c8c8c8;
  border-radius: 20px;
  background: #f4f4f4;
}

.task-search input {
  width: 100%;
  border: none;
  outline: none;
  background: none;
  font: inherit;
  font-size: 18px;
}

.task-search input::placeholder {
  color: #555;
}

.tray {
  margin-left: auto;
  padding-right: 24px;
  display: flex;
  align-items: center;
}

.tray-icons {
  display: flex;
  align-items: center;
}

.tray-icons + .tray-icons {
  margin-left: 8px;
}

.tray-icons button {
  width: 30px;
}

.tray-icons.wide button {
  width: 40px;
}

.tray-icons .ime {
  color: #f4f4f4;
  font-size: 19px;
  font-weight: 700;
  -webkit-text-stroke: 1px #444;
}

.datetime {
  width: 78px;
  text-align: right;
  white-space: nowrap;
}

/* Overlay mark */
.mark {
  position: absolute;
  top: 58px;
  left: 64px;
  width: 740px;
  height: 180px;
  opacity: 0.5;
  pointer-events: none;
  color: #868686;
}

.mark-logo {
  position: absolute;
}

.mark-title {
  position: absolute;
  top: -16px;
  left: 212px;
  font-family: "Noto Sans CJK SC", sans-serif;
  font-size: 102px;
  font-weight: 700;
  line-height: 116px;
  white-space: nowrap;
}

.mark-site {
  position: absolute;
  top: 101px;
  left: 306px;
  font-family: "Noto Sans", sans-serif;
  font-size: 53px;
  line-height: 64px;
}

.pointer {
  position: absolute;
  top: 148px;
  left: 1426px;
  pointer-events: none;
}
```
